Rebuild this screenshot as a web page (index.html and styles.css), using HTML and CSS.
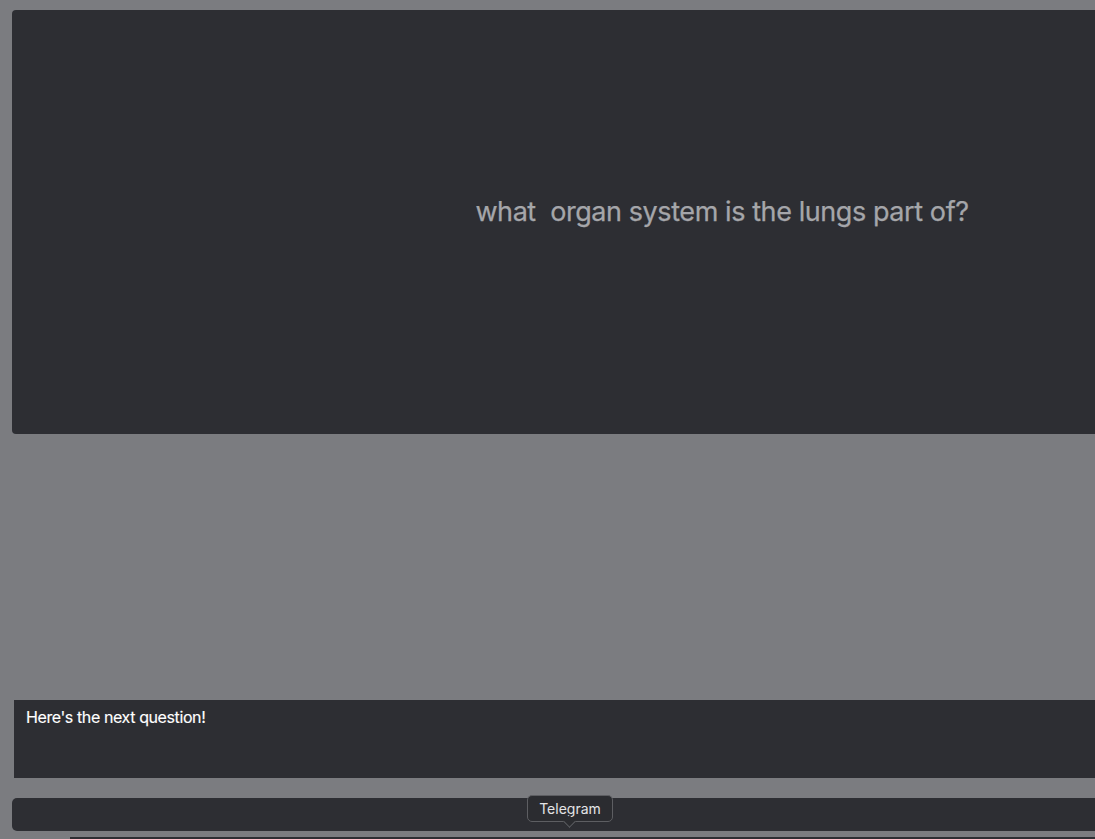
FILE: index.html
```html
<!DOCTYPE html>
<html>
<head>
<meta charset="utf-8">
<link rel="stylesheet" href="styles.css">
</head>
<body>
<div class="page">
  <section class="question-card">
    <p class="question">what  organ system is the lungs part of?</p>
  </section>
  <section class="message-box">
    <p class="message">Here's the next question!</p>
  </section>
  <div class="share-bar">
    <div class="tooltip">Telegram</div>
  </div>
  <div class="bottom-strip"></div>
</div>
</body>
</html>
```

FILE: styles.css
```css
html, body {
  margin: 0;
  padding: 0;
  background: #7b7c80;
  overflow: hidden;
  height: 839px;
}
.page {
  display: flex;
  flex-direction: column;
  padding-top: 10px;
  font-family: Inter, "Noto Sans", sans-serif;
}
.question-card {
  margin-left: 12px;
  height: 424px;
  background: #2d2e33;
  border-radius: 4px 0 0 4px;
  display: flex;
  align-items: center;
  justify-content: center;
  padding-left: 337px;
  padding-bottom: 22px;
  box-sizing: border-box;
}
.question {
  margin: 0;
  white-space: pre;
  font-size: 27px;
  color: #a5a6aa;
  letter-spacing: -0.42px;
  -webkit-text-stroke: 0.25px #a5a6aa;
}
.message-box {
  margin-top: 266px;
  margin-left: 14px;
  height: 78px;
  background: #2d2e33;
  box-sizing: border-box;
  padding: 7px 12px;
}
.message {
  margin: 0;
  font-size: 16px;
  color: #ffffff;
  letter-spacing: -0.4px;
  -webkit-text-stroke: 0.15px #ffffff;
}
.share-bar {
  position: relative;
  margin-top: 20px;
  margin-left: 12px;
  height: 33px;
  background: #2d2e33;
  border-radius: 5px 0 0 5px;
}
.tooltip {
  position: absolute;
  left: 515px;
  top: -3px;
  width: 86px;
  height: 27px;
  box-sizing: border-box;
  background: #2b2c30;
  border: 1px solid #5d5e62;
  border-radius: 5px;
  color: #e4e4e6;
  font-family: Inter, "Noto Sans", sans-serif;
  font-size: 14px;
  display: flex;
  align-items: center;
  justify-content: center;
}
.tooltip::after {
  content: "";
  position: absolute;
  left: 37px;
  bottom: -5px;
  width: 8px;
  height: 8px;
  background: #2b2c30;
  border-right: 1px solid #5d5e62;
  border-bottom: 1px solid #5d5e62;
  transform: rotate(45deg);
}
.bottom-strip {
  margin-top: 6px;
  margin-left: 70px;
  height: 2px;
  background: #2d2e33;
}
```
